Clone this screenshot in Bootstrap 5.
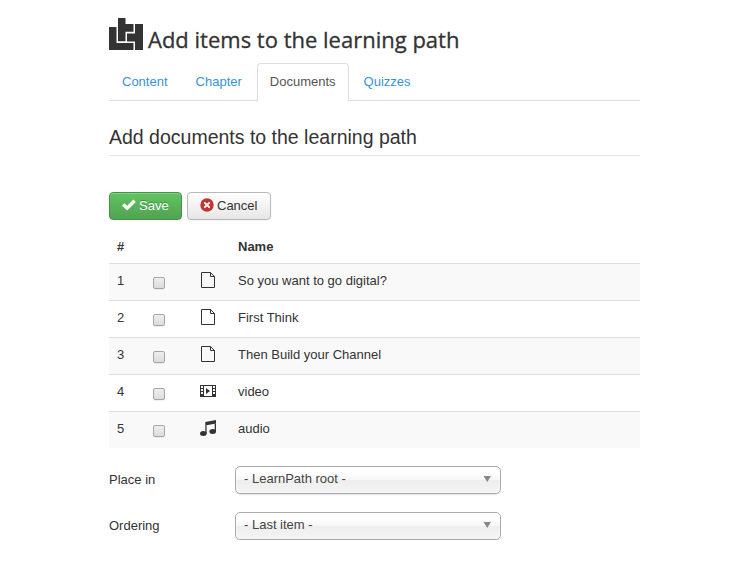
<!DOCTYPE html>
<html lang="en">
<head>
<meta charset="utf-8">
<meta name="viewport" content="width=device-width, initial-scale=1">
<title>Add items to the learning path</title>
<link href="https://cdn.jsdelivr.net/npm/bootstrap@5.3.0/dist/css/bootstrap.min.css" rel="stylesheet">
<style>
body{font-family:"Liberation Sans",Arial,sans-serif;font-size:13px;line-height:18px;color:#333;background:#fff;overflow:hidden}
.page{width:531px;margin-left:109px;padding-top:18px}
.title-row{height:45px}
.title-row h1{font:400 22px/32px "Open Sans",sans-serif;margin:5px 0 0 5px;white-space:nowrap;-webkit-text-stroke:.3px #333}
.nav-tabs{--bs-nav-tabs-border-color:#ddd;--bs-nav-tabs-link-active-color:#555;height:38px}
.nav-tabs .nav-link{padding:9px 12px 10px;line-height:18px;margin-right:2px;color:#3a94d0;border-radius:4px 4px 0 0}
.nav-tabs .nav-link.active{border-color:#ddd #ddd #fff;color:#555}
h2.section-title{font-size:19.5px;line-height:36px;margin:18px 0 36px;border-bottom:1px solid #e5e5e5;height:37px;white-space:nowrap}
.tools{gap:5px}
.tool{height:28px;font-size:13px;line-height:18px;padding:4px 12px;border-radius:4px;box-shadow:inset 0 1px 0 rgba(255,255,255,.2),0 1px 2px rgba(0,0,0,.05)}
.tool svg{margin-bottom:2px;margin-right:3px}
.tool-save{width:73px;color:#fff;text-shadow:0 -1px 0 rgba(0,0,0,.25);background:linear-gradient(#62c462,#51a351);border:1px solid #46924a}
.tool-cancel{width:84px;color:#333;background:linear-gradient(#fff,#e6e6e6);border:1px solid #b8b8b8}
.items{margin:10px 0 0;--bs-table-color:#333;--bs-table-striped-color:#333;--bs-table-striped-bg:#f9f9f9;table-layout:fixed}
.items th,.items td{padding:8px;height:37px;border:0;border-top:1px solid #ddd;line-height:18px;vertical-align:top}
.items thead th{height:33px;border:0;padding:8px 8px 7px}
.items tbody tr:last-child td{height:36px}
.items svg{display:block}
.tick{appearance:none;display:block;width:12px;height:12px;margin:5px 0 0;border:1px solid #a6a6a6;border-radius:2px;background:linear-gradient(#eee,#dcdcdc);box-shadow:0 1px 0 rgba(0,0,0,.06)}
.field-label{width:126px}
.field-row{margin-top:18px}
.chosen{width:266px;height:28px;padding:0 9px 2px 8px;border:1px solid #aaa;border-radius:5px;background:linear-gradient(#fff 20%,#f6f6f6 50%,#eee 52%,#f4f4f4 100%);box-shadow:inset 0 0 3px #fff,0 1px 1px rgba(0,0,0,.1);color:#444}
</style>
<script src="https://cdn.jsdelivr.net/npm/bootstrap@5.3.0/dist/js/bootstrap.bundle.min.js"></script>
</head>
<body>
<main class="page">
<header class="title-row d-flex align-items-start">
<svg class="flex-shrink-0" width="34" height="32" viewBox="0 0 34 32" fill="#333"><path d="M0 9H7.5V25H24.5V32H0ZM9 0H16.5V6H24.5V13.8H16.5V23.3H9ZM26 6H34V32H26V23.5H18V15.5H26Z"/></svg>
<h1>Add items to the learning path</h1>
</header>
<ul class="nav nav-tabs flex-nowrap">
<li class="nav-item"><a class="nav-link" href="#">Content</a></li>
<li class="nav-item"><a class="nav-link" href="#">Chapter</a></li>
<li class="nav-item"><a class="nav-link active" href="#">Documents</a></li>
<li class="nav-item"><a class="nav-link" href="#">Quizzes</a></li>
</ul>
<h2 class="section-title fw-normal">Add documents to the learning path</h2>
<div class="d-flex tools">
<button class="btn tool tool-save d-flex align-items-center"><svg class="flex-shrink-0" width="14" height="12" viewBox="0 0 14 12" fill="none" stroke="#fff" stroke-width="3.4"><path d="M1.2 5.5 5.2 9.2 12.6 1.8"/></svg>Save</button>
<button class="btn tool tool-cancel d-flex align-items-center"><svg class="flex-shrink-0" width="14" height="14" viewBox="0 0 14 14"><circle cx="7" cy="7" r="6.7" fill="#bd362f"/><path d="m4.3 4.3 5.4 5.4m0-5.4-5.4 5.4" stroke="#fff" stroke-width="1.9"/></svg>Cancel</button>
</div>
<table class="table table-striped items">
<colgroup><col style="width:36px"><col style="width:47px"><col style="width:38px"><col></colgroup>
<thead><tr><th>#</th><th></th><th></th><th>Name</th></tr></thead>
<tbody>
<tr><td>1</td><td><input type="checkbox" class="tick"></td><td><svg width="16" height="16"><use href="#doc"/></svg></td><td>So you want to go digital?</td></tr>
<tr><td>2</td><td><input type="checkbox" class="tick"></td><td><svg width="16" height="16"><use href="#doc"/></svg></td><td>First Think</td></tr>
<tr><td>3</td><td><input type="checkbox" class="tick"></td><td><svg width="16" height="16"><use href="#doc"/></svg></td><td>Then Build your Channel</td></tr>
<tr><td>4</td><td><input type="checkbox" class="tick"></td><td><svg width="16" height="16"><path fill="#333" fill-rule="evenodd" d="M0 2H16V14H0ZM4 3V13H12V3ZM1 3V5H3V3ZM1 6V8H3V6ZM1 9V11H3V9ZM13 3V5H15V3ZM13 6V8H15V6ZM13 9V11H15V9ZM6 5V11L10 8Z"/></svg></td><td>video</td></tr>
<tr><td>5</td><td><input type="checkbox" class="tick"></td><td><svg width="16" height="16" fill="#333"><path d="M5.3 2 16 0V3.5L5.3 5.5ZM5.3 3H6.6V14H5.3ZM14.7 1H16V12H14.7Z"/><ellipse cx="3.3" cy="13.5" rx="3.3" ry="2.5"/><ellipse cx="12.7" cy="11.5" rx="3.3" ry="2.5"/></svg></td><td>audio</td></tr>
</tbody>
</table>
<div class="d-flex align-items-center field-row"><span class="field-label">Place in</span><div class="chosen d-flex align-items-center justify-content-between"><span>- LearnPath root -</span><svg width="8" height="6"><path d="M.5 0H8L4.25 6Z" fill="#888"/></svg></div></div>
<div class="d-flex align-items-center field-row"><span class="field-label">Ordering</span><div class="chosen d-flex align-items-center justify-content-between"><span>- Last item -</span><svg width="8" height="6"><path d="M.5 0H8L4.25 6Z" fill="#888"/></svg></div></div>
<svg width="0" height="0" class="d-block"><symbol id="doc" viewBox="0 0 16 16"><path d="M1.5.5H10.5L14.5 4.5V15.5H1.5ZM10.5 .5V4.5H14.5" fill="none" stroke="#333"/></symbol></svg>
</main>
</body>
</html>
